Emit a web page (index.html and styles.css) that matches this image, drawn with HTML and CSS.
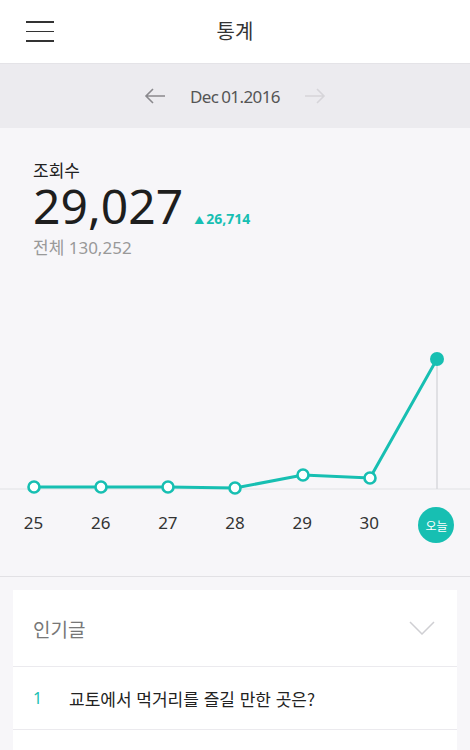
FILE: index.html
```html
<!DOCTYPE html>
<html lang="ko">
<head>
<meta charset="utf-8">
<link rel="stylesheet" href="styles.css">
</head>
<body>
<header class="topbar">
  <div class="menu"><span></span><span></span><span></span></div>
  <h1 class="title">통계</h1>
</header>
<div class="datebar">
  <svg class="arrow" width="22" height="16" viewBox="0 0 22 16"><path d="M21 8H2M9 1L2 8l7 7" fill="none" stroke="#8a898d" stroke-width="1.6"/></svg>
  <span class="date">Dec 01.2016</span>
  <svg class="arrow" width="22" height="16" viewBox="0 0 22 16"><path d="M1 8h19M13 1l7 7-7 7" fill="none" stroke="#d6d5d9" stroke-width="1.6"/></svg>
</div>
<main class="stats">
  <div class="summary">
    <div class="label">조회수</div>
    <div class="count-row"><span class="count">29,027</span><span class="delta"><span class="tri">▲</span>26,714</span></div>
    <div class="total">전체 130,252</div>
  </div>
  <svg class="chart" width="470" height="210" viewBox="0 0 470 210">
    <line x1="0" y1="202" x2="470" y2="202" stroke="#e2e1e5" stroke-width="1.2"/>
    <line x1="437" y1="72" x2="437" y2="202" stroke="#d9d8dc" stroke-width="1.5"/>
    <polyline points="34,200 101,200 168,200 235,201 303,188 370,191 437,72" fill="none" stroke="#17bfb2" stroke-width="3"/>
    <g fill="#fff" stroke="#17bfb2" stroke-width="2.6">
      <circle cx="34" cy="200" r="5.5"/>
      <circle cx="101" cy="200" r="5.5"/>
      <circle cx="168" cy="200" r="5.5"/>
      <circle cx="235" cy="201" r="5.5"/>
      <circle cx="303" cy="188" r="5.5"/>
      <circle cx="370" cy="191" r="5.5"/>
    </g>
    <circle cx="437" cy="72" r="7" fill="#17bfb2"/>
  </svg>
  <div class="days">
    <span>25</span><span>26</span><span>27</span><span>28</span><span>29</span><span>30</span><span class="today">오늘</span>
  </div>
</main>
<section class="popular">
  <div class="card">
    <div class="card-head">
      <span>인기글</span>
      <svg width="26" height="14" viewBox="0 0 26 14"><path d="M1 1l12 12L25 1" fill="none" stroke="#cfcfd3" stroke-width="1.5"/></svg>
    </div>
    <div class="item"><span class="rank">1</span><span class="item-title">교토에서 먹거리를 즐길 만한 곳은?</span></div>
    <div class="item"></div>
  </div>
</section>
</body>
</html>
```

FILE: styles.css
```css
* { box-sizing: border-box; }
html, body { margin: 0; padding: 0; }
body {
  width: 470px;
  height: 750px;
  overflow: hidden;
  background: #f7f6f9;
  font-family: "Noto Sans", "Noto Sans CJK KR", sans-serif;
  color: #222;
}
.topbar {
  height: 64px;
  background: #fff;
  border-bottom: 1px solid #e4e3e7;
  display: flex;
  align-items: center;
  justify-content: center;
  position: relative;
}
.menu {
  position: absolute;
  left: 26px;
  top: 21px;
  width: 28px;
  display: flex;
  flex-direction: column;
  gap: 8px;
}
.menu span { display: block; height: 1.5px; background: #333; }
.title {
  margin: 0;
  font-family: "Noto Sans CJK KR", sans-serif;
  font-weight: 400;
  font-size: 20px;
  color: #333;
  line-height: 1;
  margin-top: -2px;
}
.datebar {
  height: 64px;
  background: #ecebef;
  display: flex;
  align-items: center;
  justify-content: center;
  gap: 24px;
}
.date {
  font-size: 17px;
  color: #555;
  letter-spacing: -0.6px;
  word-spacing: -1px;
}
.stats {
  border-bottom: 1px solid #e2e1e5;
  height: 449px;
}
.summary { padding: 30px 33px 0; }
.label {
  font-family: "Noto Sans CJK KR", sans-serif;
  font-size: 17px;
  color: #222;
  line-height: 24px;
}
.count-row { display: flex; align-items: baseline; gap: 11px; height: 48px; }
.count {
  font-size: 48px;
  font-weight: 400;
  color: #1e1e1e;
  letter-spacing: 0;
  line-height: 48px;
}
.delta {
  font-size: 14px;
  font-weight: 700;
  color: #17bfb2;
  display: flex;
  align-items: baseline;
  gap: 2px;
}
.tri { font-size: 10px; }
.total {
  font-family: "Noto Sans", "Noto Sans CJK KR", sans-serif;
  font-size: 17px;
  color: #999;
  margin-top: 6px;
  line-height: 24px;
}
.chart { display: block; margin-top: 27px; }
.days {
  display: grid;
  grid-template-columns: repeat(7, 1fr);
  align-items: center;
  justify-items: center;
  height: 50px;
  margin-top: 3px;
}
.days span {
  font-size: 17px;
  color: #333;
  margin-top: -6px;
}
.days .today {
  width: 36px;
  height: 36px;
  border-radius: 50%;
  background: #17bfb2;
  color: #fff;
  font-family: "Noto Sans CJK KR", sans-serif;
  font-size: 12px;
  display: flex;
  align-items: center;
  justify-content: center;
  margin-top: 0;
}
.popular { padding: 13px 13px 0; }
.card { background: #fff; }
.card-head {
  height: 77px;
  display: flex;
  align-items: center;
  justify-content: space-between;
  padding: 0 22px 0 20px;
  border-bottom: 1px solid #ebeaee;
  font-family: "Noto Sans CJK KR", sans-serif;
  font-size: 19px;
  color: #777;
}
.item {
  height: 63px;
  display: flex;
  align-items: center;
  border-bottom: 1px solid #ebeaee;
  padding-left: 20px;
}
.rank {
  width: 36px;
  font-size: 16px;
  color: #17bfb2;
}
.item-title {
  font-family: "Noto Sans CJK KR", sans-serif;
  font-size: 17px;
  color: #222;
}
```
